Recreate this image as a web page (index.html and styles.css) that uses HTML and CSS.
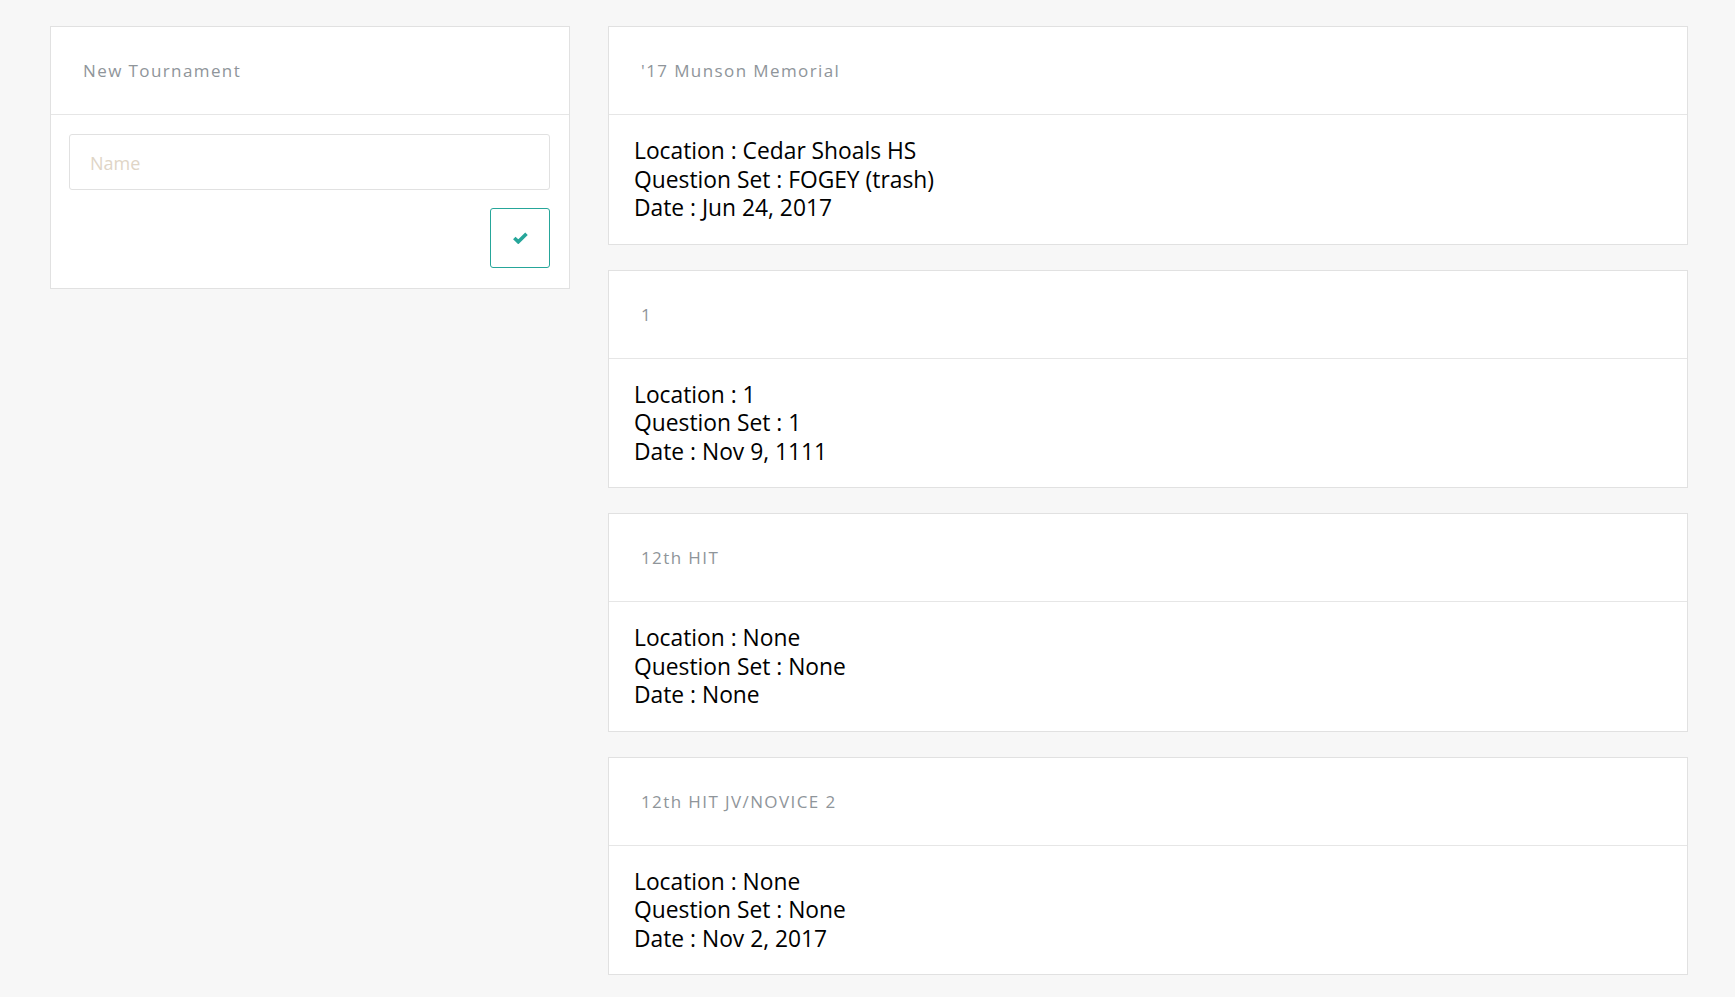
FILE: index.html
```html
<!DOCTYPE html>
<html>
<head>
<meta charset="utf-8">
<link rel="stylesheet" href="styles.css">
</head>
<body>
<div class="page">
  <div class="col-left">
    <div class="card">
      <div class="card-head">New Tournament</div>
      <div class="card-body form-body">
        <input class="name-input" type="text" placeholder="Name">
        <div class="actions">
          <button class="ok-btn" type="button">
            <svg width="15" height="12" viewBox="0 0 15 12"><path d="M1.3 6 L5.3 9.8 L13.5 1.8" fill="none" stroke="#26a69a" stroke-width="3.6" stroke-linecap="butt" stroke-linejoin="miter"/></svg>
          </button>
        </div>
      </div>
    </div>
  </div>
  <div class="col-right">
    <div class="card">
      <div class="card-head">'17 Munson Memorial</div>
      <div class="card-body info">
        <div>Location : Cedar Shoals HS</div>
        <div>Question Set : FOGEY (trash)</div>
        <div>Date : Jun 24, 2017</div>
      </div>
    </div>
    <div class="card">
      <div class="card-head">1</div>
      <div class="card-body info">
        <div>Location : 1</div>
        <div>Question Set : 1</div>
        <div>Date : Nov 9, 1111</div>
      </div>
    </div>
    <div class="card">
      <div class="card-head">12th HIT</div>
      <div class="card-body info">
        <div>Location : None</div>
        <div>Question Set : None</div>
        <div>Date : None</div>
      </div>
    </div>
    <div class="card">
      <div class="card-head">12th HIT JV/NOVICE 2</div>
      <div class="card-body info">
        <div>Location : None</div>
        <div>Question Set : None</div>
        <div>Date : Nov 2, 2017</div>
      </div>
    </div>
  </div>
</div>
</body>
</html>
```

FILE: styles.css
```css
html, body {
  margin: 0;
  padding: 0;
  background: #f7f7f7;
  font-family: "Open Sans", "Liberation Sans", sans-serif;
}
.page {
  display: grid;
  grid-template-columns: 520px 1fr;
  column-gap: 38px;
  padding: 26px 47px 0 50px;
  align-items: start;
}
.col-right {
  display: flex;
  flex-direction: column;
  gap: 25px;
}
.card {
  background: #fff;
  border: 1px solid #e1e1e1;
}
.card-head {
  padding: 33px 31px 32px 32px;
  line-height: 22px;
  font-size: 17px;
  letter-spacing: 1.4px;
  color: #8f959a;
  border-bottom: 1px solid #e6e6e6;
}
.info {
  padding: 22px 25px 21px;
  font-size: 22.8px;
  line-height: 28.5px;
  color: #000;
}
.form-body {
  padding: 19px 19px 20px 18px;
}
.name-input {
  display: block;
  box-sizing: border-box;
  width: 100%;
  height: 56px;
  border: 1px solid #e1e1e1;
  border-radius: 3px;
  padding: 2px 20px 0;
  font-family: "Open Sans", "Liberation Sans", sans-serif;
  font-size: 18px;
  outline: none;
}
.name-input::placeholder {
  color: #e0d5c6;
}
.actions {
  display: flex;
  justify-content: flex-end;
  margin-top: 18px;
}
.ok-btn {
  width: 60px;
  height: 60px;
  box-sizing: border-box;
  border: 1px solid #26a69a;
  border-radius: 3px;
  background: #fff;
  display: flex;
  align-items: center;
  justify-content: center;
  padding: 0;
}
```
